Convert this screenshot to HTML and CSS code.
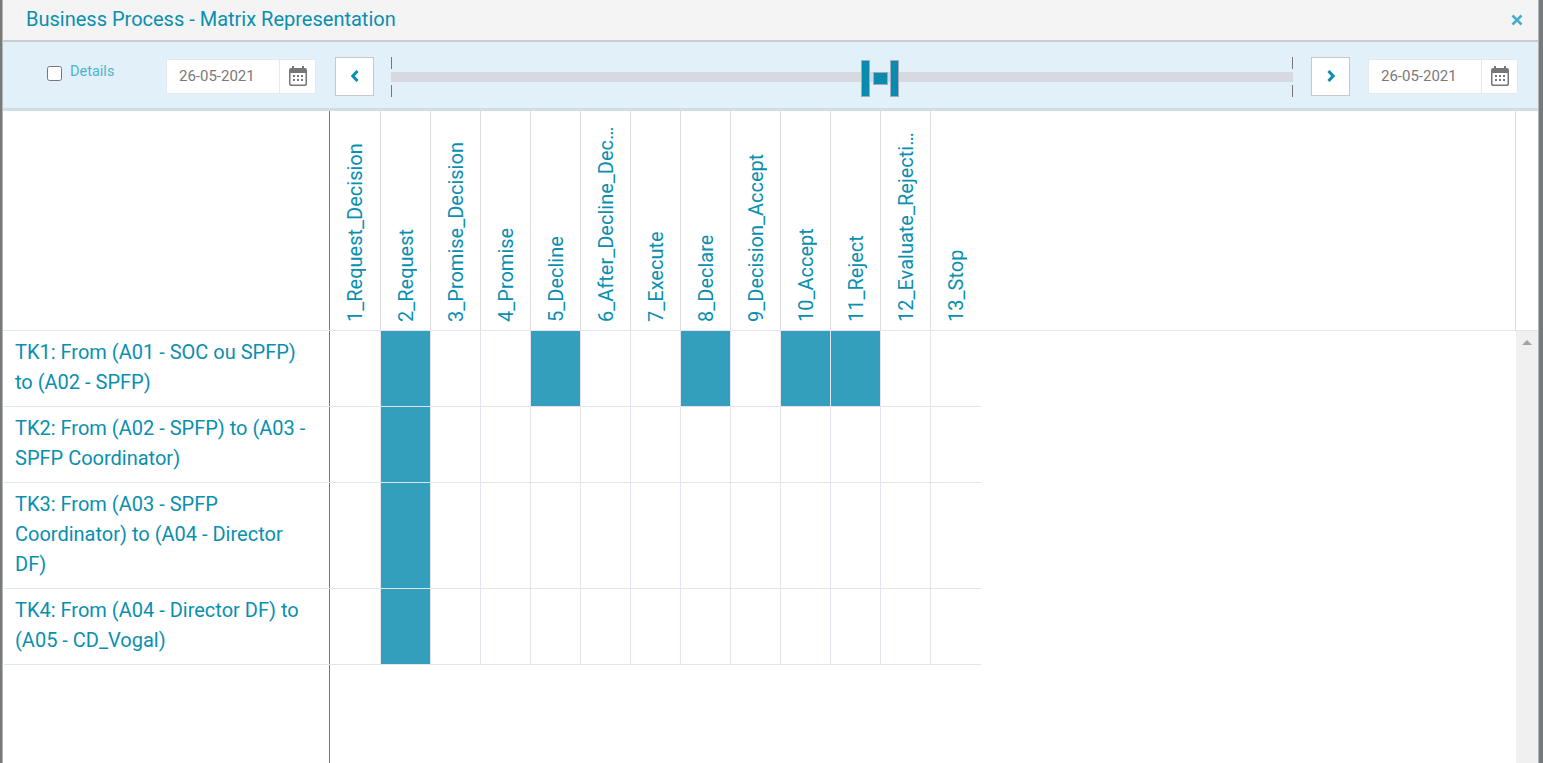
FILE: index.html

```html
<!DOCTYPE html>
<html lang="en">
<head>
  <meta charset="UTF-8" />
  <title>Business Process - Matrix Representation</title>
  <link rel="stylesheet" href="styles.css">
</head>
<body>
  <div class="modal">
    <div class="title-bar">
      <h1>Business Process - Matrix Representation</h1>
      <svg class="close-icon" width="14" height="14" viewBox="0 0 14 14"><path d="M2.5 2.5 L11.5 11.5 M11.5 2.5 L2.5 11.5" /></svg>
    </div>

    <div class="toolbar">
      <label class="details"><input type="checkbox" /><span>Details</span></label>

      <div class="date-box">
        <span class="date-text">26-05-2021</span>
        <span class="date-btn">
          <svg width="18" height="20" viewBox="0 0 18 20"><path class="cal" fill-rule="evenodd" d="M3 0h2v2h8V0h2v2h1a2 2 0 0 1 2 2v14a2 2 0 0 1-2 2H2a2 2 0 0 1-2-2V4a2 2 0 0 1 2-2h1zM1.5 7v10.5a1 1 0 0 0 1 1h13a1 1 0 0 0 1-1V7zM4 9h2v2H4zM8 9h2v2H8zM12 9h2v2h-2zM4 13h2v2H4zM8 13h2v2H8zM12 13h2v2h-2z" /></svg>
        </span>
      </div>

      <button class="nav-btn nav-left"><svg width="10" height="14" viewBox="0 0 10 14"><path d="M7.5 2 L2.8 7 L7.5 12" /></svg></button>

      <div class="slider">
        <div class="track"></div>
        <div class="handles">
          <span class="handle"></span>
          <span class="handle-mid"></span>
          <span class="handle"></span>
        </div>
      </div>

      <button class="nav-btn nav-right"><svg width="10" height="14" viewBox="0 0 10 14"><path d="M2.5 2 L7.2 7 L2.5 12" /></svg></button>

      <div class="date-box date-right">
        <span class="date-text">26-05-2021</span>
        <span class="date-btn">
          <svg width="18" height="20" viewBox="0 0 18 20"><path class="cal" fill-rule="evenodd" d="M3 0h2v2h8V0h2v2h1a2 2 0 0 1 2 2v14a2 2 0 0 1-2 2H2a2 2 0 0 1-2-2V4a2 2 0 0 1 2-2h1zM1.5 7v10.5a1 1 0 0 0 1 1h13a1 1 0 0 0 1-1V7zM4 9h2v2H4zM8 9h2v2H8zM12 9h2v2h-2zM4 13h2v2H4zM8 13h2v2H8zM12 13h2v2h-2z" /></svg>
        </span>
      </div>
    </div>

    <div class="matrix-head">
      <div class="corner"></div>
      <div class="col-head"><span>1_Request_Decision</span></div>
      <div class="col-head"><span>2_Request</span></div>
      <div class="col-head"><span>3_Promise_Decision</span></div>
      <div class="col-head"><span>4_Promise</span></div>
      <div class="col-head"><span>5_Decline</span></div>
      <div class="col-head"><span>6_After_Decline_Decision</span></div>
      <div class="col-head"><span>7_Execute</span></div>
      <div class="col-head"><span>8_Declare</span></div>
      <div class="col-head"><span>9_Decision_Accept</span></div>
      <div class="col-head"><span>10_Accept</span></div>
      <div class="col-head"><span>11_Reject</span></div>
      <div class="col-head"><span>12_Evaluate_Rejection</span></div>
      <div class="col-head"><span>13_Stop</span></div>
      <div class="head-rest"></div>
    </div>

    <div class="matrix-body">
      <div class="rows">
        <div class="row">
          <div class="row-label">TK1: From (A01 - SOC ou SPFP) to (A02 - SPFP)</div>
          <div class="cell"></div><div class="cell on"></div><div class="cell"></div><div class="cell"></div><div class="cell on"></div><div class="cell"></div><div class="cell"></div><div class="cell on"></div><div class="cell"></div><div class="cell on"></div><div class="cell on"></div><div class="cell"></div><div class="cell"></div>
        </div>
        <div class="row">
          <div class="row-label">TK2: From (A02 - SPFP) to (A03 - SPFP Coordinator)</div>
          <div class="cell"></div><div class="cell on"></div><div class="cell"></div><div class="cell"></div><div class="cell"></div><div class="cell"></div><div class="cell"></div><div class="cell"></div><div class="cell"></div><div class="cell"></div><div class="cell"></div><div class="cell"></div><div class="cell"></div>
        </div>
        <div class="row">
          <div class="row-label">TK3: From (A03 - SPFP Coordinator) to (A04 - Director DF)</div>
          <div class="cell"></div><div class="cell on"></div><div class="cell"></div><div class="cell"></div><div class="cell"></div><div class="cell"></div><div class="cell"></div><div class="cell"></div><div class="cell"></div><div class="cell"></div><div class="cell"></div><div class="cell"></div><div class="cell"></div>
        </div>
        <div class="row">
          <div class="row-label">TK4: From (A04 - Director DF) to (A05 - CD_Vogal)</div>
          <div class="cell"></div><div class="cell on"></div><div class="cell"></div><div class="cell"></div><div class="cell"></div><div class="cell"></div><div class="cell"></div><div class="cell"></div><div class="cell"></div><div class="cell"></div><div class="cell"></div><div class="cell"></div><div class="cell"></div>
        </div>
        <div class="label-fill"></div>
      </div>
      <div class="scrollbar"><span class="scroll-up"></span></div>
    </div>
  </div>
</body>
</html>
```

FILE: styles.css

```css
* { box-sizing: border-box; }
html, body { margin: 0; height: 100%; overflow: hidden; }
body { font-family: Roboto, sans-serif; background: #747a7d; color: #0a8fb0; }

.modal { display: flex; flex-direction: column; width: 1537px; height: 763px; margin-left: 2px; background: #fff; border-left: 1px solid #b4b4b4; border-right: 1px solid #b4b4b4; }

.title-bar { display: flex; align-items: center; justify-content: space-between; height: 42px; padding: 0 14px 2px 23px; background: #f4f4f4; border-bottom: 2px solid #c9cdd0; flex: none; }
.title-bar h1 { margin: 0; font-size: 20px; font-weight: 400; color: #0a8fb0; }
.close-icon { margin-top: 2px; }
.close-icon path { stroke: #46afc8; stroke-width: 2.6; fill: none; }

.toolbar { display: flex; align-items: center; height: 68px; padding-top: 2px; background: #e2f1f9; border-bottom: 2px solid #c8dfec; flex: none; }
.details { display: flex; align-items: center; width: 119px; margin-left: 44px; margin-top: -6px; font-size: 14.5px; color: #4fb3d0; flex: none; }
.details input { width: 15px; height: 15px; margin: 0 8px 0 0; }
.details span { margin-top: -4px; }

.date-box { display: flex; height: 35px; width: 150px; background: #fff; border: 1px solid #e4e9ee; flex: none; }
.date-right { margin-left: 18px; }
.date-text { width: 113px; padding-left: 12px; line-height: 33px; font-size: 15px; color: #7a7a7a; border-right: 1px solid #e4e9ee; }
.date-btn { flex: 1; display: flex; align-items: center; justify-content: center; }
.cal { fill: #777; }

.nav-btn { display: flex; align-items: center; justify-content: center; width: 39px; height: 39px; padding: 0; background: #fff; border: 1px solid #c8c8c8; flex: none; }
.nav-btn path { fill: none; stroke: #0a8fb0; stroke-width: 3; }
.nav-left { margin-left: 19px; }

.slider { position: relative; width: 902px; height: 40px; margin: 2px 18px 0 17px; flex: none; border-left: 1px solid #777; border-right: 1px solid #777; }
.track { position: absolute; left: -1px; right: -1px; top: 15px; height: 10px; background: #d7d9e0; box-shadow: 0 -3px 0 #e2f1f9, 0 3px 0 #e2f1f9; }
.handles { position: absolute; left: 469px; top: 3px; display: flex; align-items: center; gap: 3px; }
.handle { width: 9px; height: 37px; background: #0a8aad; border: 1px solid #a3a9c0; }
.handle-mid { width: 15px; height: 13px; margin-right: -1px; background: #0a8aad; border: 1px solid #a3a9c0; }

.matrix-head { display: flex; height: 221px; border-top: 1px solid #dcdcdc; border-bottom: 1px solid #e2e4ef; flex: none; }
.corner { width: 327px; flex: none; border-right: 1px solid #777; }
.col-head { width: 50px; flex: none; border-right: 1px solid #dcdcdc; display: flex; align-items: flex-end; justify-content: center; padding-bottom: 8px; }
.col-head:nth-child(2) { width: 51px; }
.col-head:nth-child(14) { border-right: none; }
.col-head span { writing-mode: vertical-rl; transform: rotate(180deg); max-height: 197px; overflow: hidden; white-space: nowrap; text-overflow: ellipsis; font-size: 20px; line-height: 22px; color: #0a8fb0; }
.head-rest { width: 535px; flex: none; border-right: 1px solid #dcdcdc; }

.matrix-body { display: flex; flex: 1; min-height: 0; }
.rows { width: 1513px; flex: none; display: flex; flex-direction: column; padding-left: 1px; }
.row { display: flex; width: 977px; border-bottom: 1px solid #e2e4ef; }
.row-label { width: 326px; padding: 6px 22px 9px 11px; font-size: 20px; line-height: 30px; color: #0a8fb0; border-right: 1px solid #777; flex: none; }
.cell { width: 50px; flex: none; border-right: 1px solid #e2e4ef; }
.cell:nth-child(2) { width: 51px; }
.cell:last-child { border-right: none; }
.cell.on { background: #349fbc; }
.label-fill { flex: 1; width: 326px; border-right: 1px solid #777; }

.scrollbar { flex: 1; display: flex; justify-content: center; align-items: flex-start; padding-top: 9px; background: #f0f0f0; }
.scroll-up { width: 0; height: 0; border-left: 5px solid transparent; border-right: 5px solid transparent; border-bottom: 5px solid #a3a3a3; }
```
